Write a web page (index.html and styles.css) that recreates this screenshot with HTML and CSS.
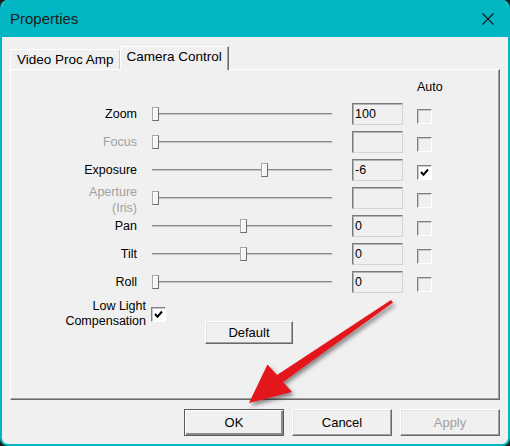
FILE: index.html
```html
<!DOCTYPE html>
<html lang="en">
<head>
<meta charset="UTF-8">
<meta name="viewport" content="width=device-width, initial-scale=1.0">
<title>Properties</title>
<link rel="stylesheet" href="styles.css">
</head>
<body>

<div class="window">
  <div class="titlebar">
    <span class="title">Properties</span>
    <svg class="close" width="12" height="12" viewBox="0 0 12 12">
      <path d="M0.5 0.5 L11.5 11.5 M11.5 0.5 L0.5 11.5" stroke="#1b1b1b" stroke-width="1.1" fill="none"/>
    </svg>
  </div>

  <div class="content">
    <div class="tabs">
      <div class="tab">Video Proc Amp</div>
      <div class="tab active">Camera Control</div>
    </div>

    <div class="panel">
      <div class="controls">
        <div></div><div></div><div></div>
        <div class="auto-head">Auto</div>

        <div class="label">Zoom</div>
        <div class="slider"><span class="thumb" style="left: 0px"></span></div>
        <div class="field">100</div>
        <div class="check"></div>

        <div class="label disabled">Focus</div>
        <div class="slider"><span class="thumb" style="left: 0px"></span></div>
        <div class="field"></div>
        <div class="check"></div>

        <div class="label">Exposure</div>
        <div class="slider"><span class="thumb" style="left: 109px"></span></div>
        <div class="field">-6</div>
        <div class="check checked">
          <svg width="13" height="13" viewBox="0 0 13 13"><polyline points="3,6 5.5,8.7 10,3.5" stroke="#000" stroke-width="2" fill="none"/></svg>
        </div>

        <div class="label disabled two">Aperture<br>(Iris)</div>
        <div class="slider"><span class="thumb" style="left: 0px"></span></div>
        <div class="field"></div>
        <div class="check"></div>

        <div class="label">Pan</div>
        <div class="slider"><span class="thumb" style="left: 88px"></span></div>
        <div class="field">0</div>
        <div class="check"></div>

        <div class="label">Tilt</div>
        <div class="slider"><span class="thumb" style="left: 88px"></span></div>
        <div class="field">0</div>
        <div class="check"></div>

        <div class="label">Roll</div>
        <div class="slider"><span class="thumb" style="left: 0px"></span></div>
        <div class="field">0</div>
        <div class="check"></div>
      </div>

      <div class="extra">
        <div class="lowlight">
          <span class="lowlight-label">Low Light<br>Compensation</span>
          <div class="check checked">
            <svg width="13" height="13" viewBox="0 0 13 13"><polyline points="3,6 5.5,8.7 10,3.5" stroke="#000" stroke-width="2" fill="none"/></svg>
          </div>
        </div>
        <button class="btn default-btn">Default</button>
      </div>
    </div>

    <div class="buttons">
      <button class="btn ok">OK</button>
      <button class="btn">Cancel</button>
      <button class="btn" disabled>Apply</button>
    </div>
  </div>
</div>

<!-- red pointer drawn over the dialog -->
<svg class="arrow" width="510" height="446" viewBox="0 0 510 446">
  <defs>
    <filter id="shade" x="-20%" y="-20%" width="140%" height="140%">
      <feDropShadow dx="2" dy="3" stdDeviation="2" flood-color="#000" flood-opacity="0.45"/>
    </filter>
  </defs>
  <polygon filter="url(#shade)" fill="#e3141c"
    points="391,300 393,302.5 283,382 292,392 249,403 267.5,364.5 277,375"/>
</svg>

</body>
</html>
```

FILE: styles.css
```css
body {
  margin: 0;
  background-color: #1e1e1e;
  font-family: "Liberation Sans", Arial, sans-serif;
  color: #000;
  position: relative;
}

.window {
  height: 446px;
  box-sizing: border-box;
  border: 2px solid #00b7c3;
  border-top: none;
  border-radius: 8px;
  background-color: #f0f0f0;
  overflow: hidden;
}

.titlebar {
  height: 37px;
  background-color: #00b7c3;
  display: flex;
  align-items: center;
  justify-content: space-between;
  padding: 0 14px 0 8px;
}

.title {
  font-size: 15px;
  color: #1b1b1b;
}

.close {
  display: block;
}

.content {
  padding: 9px 8px 0 8px;
}

/* tab strip */
.tabs {
  display: flex;
  align-items: flex-end;
  height: 23px;
  font-size: 13.5px;
  position: relative;
  z-index: 1;
}

.tab {
  height: 20px;
  box-sizing: border-box;
  padding: 2px 5px 0 6px;
  border-top: 1px solid #fff;
  border-left: 1px solid #fff;
  border-right: 1px solid #c8c8c8;
  background-color: #f0f0f0;
}

.tab.active {
  height: 24px;
  margin-bottom: -1px;
  padding: 2px 6px 0 6px;
  border-right: 1px solid #696969;
  box-shadow: inset -1px 0 0 #a0a0a0;
}

.panel {
  height: 331px;
  box-sizing: border-box;
  border-top: 1px solid #fff;
  border-left: 1px solid #fff;
  border-right: 1px solid #696969;
  border-bottom: 1px solid #696969;
  box-shadow: inset -1px -1px 0 #a0a0a0;
  padding-top: 10px;
  font-size: 12.5px;
}

.controls {
  display: grid;
  grid-template-columns: 141px 200px 65px 15px;
  grid-template-rows: 17px repeat(7, 22px);
  row-gap: 6px;
  align-items: center;
}

.auto-head {
  align-self: start;
  line-height: 15px;
}

.label {
  text-align: right;
  padding-right: 15px;
  line-height: 16px;
}

.label.two {
  margin-top: 4px;
}

.disabled {
  color: #a0a0a0;
}

/* trackbar */
.slider {
  position: relative;
  width: 180px;
  height: 14px;
}

.slider::before {
  content: "";
  position: absolute;
  left: 0;
  right: 0;
  top: 6px;
  height: 1px;
  background-color: #8a8a8a;
  border-bottom: 1px solid #c4c4c4;
}

.thumb {
  position: absolute;
  top: 0;
  width: 7px;
  height: 14px;
  box-sizing: border-box;
  background-color: #f4f4f4;
  border: 1px solid #a8a8a8;
  border-right-color: #6e6e6e;
  border-bottom-color: #6e6e6e;
  box-shadow: inset 1px 1px 0 #fff;
}

.field {
  width: 51px;
  height: 22px;
  box-sizing: border-box;
  border: 1px solid;
  border-color: #7a7a7a #d4d4d4 #d4d4d4 #7a7a7a;
  box-shadow: inset 1px 1px 0 #b4b4b4;
  padding-left: 2px;
  line-height: 20px;
}

.check {
  width: 15px;
  height: 15px;
  box-sizing: border-box;
  border: 1px solid;
  border-color: #808080 #fff #fff #808080;
  box-shadow: inset 1px 1px 0 #c8c8c8;
  margin-top: 4px;
  display: flex;
  align-items: center;
  justify-content: center;
}

.check.checked {
  background-color: #fff;
}

.check svg {
  display: block;
}

.extra {
  display: flex;
  align-items: flex-start;
  margin-top: 6px;
}

.lowlight {
  display: flex;
  align-items: center;
  gap: 5px;
}

.lowlight-label {
  width: 135px;
  text-align: right;
  line-height: 15px;
}

.lowlight .check {
  margin-top: 0;
}

/* push buttons */
.btn {
  font-family: "Liberation Sans", Arial, sans-serif;
  font-size: 13px;
  color: #000;
  background-color: #f0f0f0;
  border: 1px solid;
  border-color: #fff #696969 #696969 #fff;
  box-shadow: inset -1px -1px 0 #a0a0a0, inset 1px 1px 0 #e3e3e3;
  padding: 0;
  margin: 0;
}

.btn:disabled {
  color: #a0a0a0;
}

.default-btn {
  width: 88px;
  height: 23px;
  margin-left: 39px;
  margin-top: 22px;
}

.buttons {
  display: flex;
  justify-content: flex-end;
  gap: 8px;
  margin-top: 9px;
}

.buttons .btn {
  width: 100px;
  height: 27px;
}

.btn.ok {
  border-color: #5a5a5a;
  box-shadow: inset 1px 1px 0 #fff, inset -2px -2px 0 #8a8a8a;
}

.arrow {
  position: absolute;
  top: 0;
  left: 0;
  pointer-events: none;
}
```
